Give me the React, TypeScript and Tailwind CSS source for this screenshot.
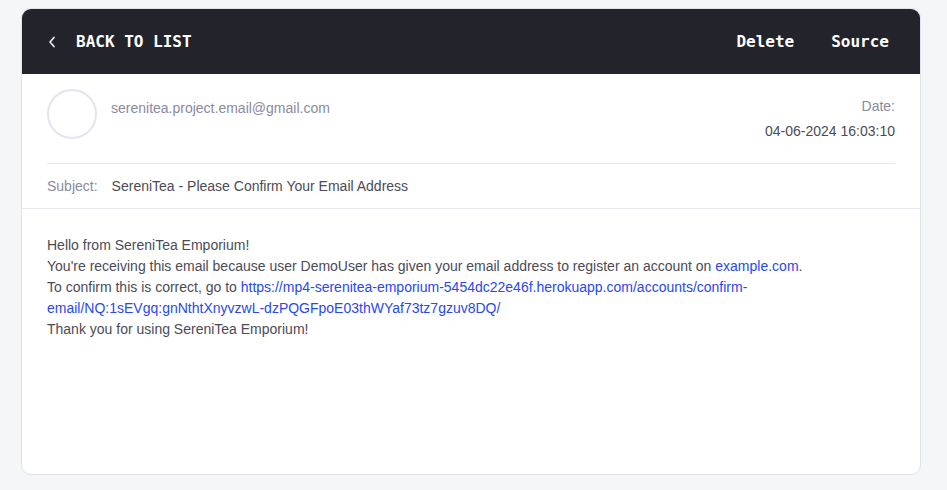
import React from 'react';

const App: React.FC = () => {
    return (
        <div className="min-h-screen w-full bg-[#f5f6f8] pt-[8px] pl-[21px] pr-[26px] font-['Liberation_Sans',Arial,sans-serif]">
            <div className="flex h-[467px] flex-col overflow-hidden rounded-[10px] border border-[#e2e2ec] bg-white">
                {/* top bar */}
                <div className="flex h-[65px] shrink-0 items-center justify-between bg-[#23242b] pl-[24px] pr-[31px] font-['DejaVu_Sans_Mono',monospace] text-[16px] font-bold text-white">
                    <button className="flex items-center">
                        <svg width="10" height="14" viewBox="0 0 10 14" className="ml-[1px]">
                            <path d="M7 2.5 L3 7 L7 11.5" fill="none" stroke="#e6e6ea" strokeWidth="1.8" strokeLinecap="round" strokeLinejoin="round" />
                        </svg>
                        <span className="ml-[19px]">BACK TO LIST</span>
                    </button>
                    <div className="flex items-center gap-[37px]">
                        <button>Delete</button>
                        <button>Source</button>
                    </div>
                </div>

                {/* sender */}
                <div className="mx-[25px] flex border-b border-[#e8e8ee] pt-[15px] pb-[23px]">
                    <div className="h-[50px] w-[50px] shrink-0 rounded-full border-2 border-[#e4e4f0]" />
                    <div className="ml-[14px] mt-[9px] flex-1 text-[14px] text-[#8a8aa0]">serenitea.project.email@gmail.com</div>
                    <div className="mt-[9px] text-right text-[14px] leading-[17px]">
                        <div className="text-[#8a8aa0]">Date:</div>
                        <div className="mt-[8px] text-[#4b4b57]">04-06-2024 16:03:10</div>
                    </div>
                </div>

                {/* subject */}
                <div className="flex h-[45px] items-center border-b border-[#e8e8ee] px-[25px] text-[14px]">
                    <span className="text-[#8a8aa0]">Subject:</span>
                    <span className="ml-[14px] text-[#4b4b57]">SereniTea - Please Confirm Your Email Address</span>
                </div>

                {/* body */}
                <div className="px-[25px] pt-[26px] text-[14px] leading-[21px] text-[#4b4b57]">
                    <div>Hello from SereniTea Emporium!</div>
                    <div>
                        You're receiving this email because user DemoUser has given your email address to register an account on{' '}
                        <a className="text-[#2a47f2]">example.com</a>.
                    </div>
                    <div>
                        To confirm this is correct, go to{' '}
                        <a className="text-[#2a47f2]">
                            https://mp4-serenitea-emporium-5454dc22e46f.herokuapp.com/accounts/confirm-email/NQ:1sEVgq:gnNthtXnyvzwL-dzPQGFpoE03thWYaf73tz7gzuv8DQ/
                        </a>
                    </div>
                    <div>Thank you for using SereniTea Emporium!</div>
                </div>
            </div>
        </div>
    );
};

export default App;
